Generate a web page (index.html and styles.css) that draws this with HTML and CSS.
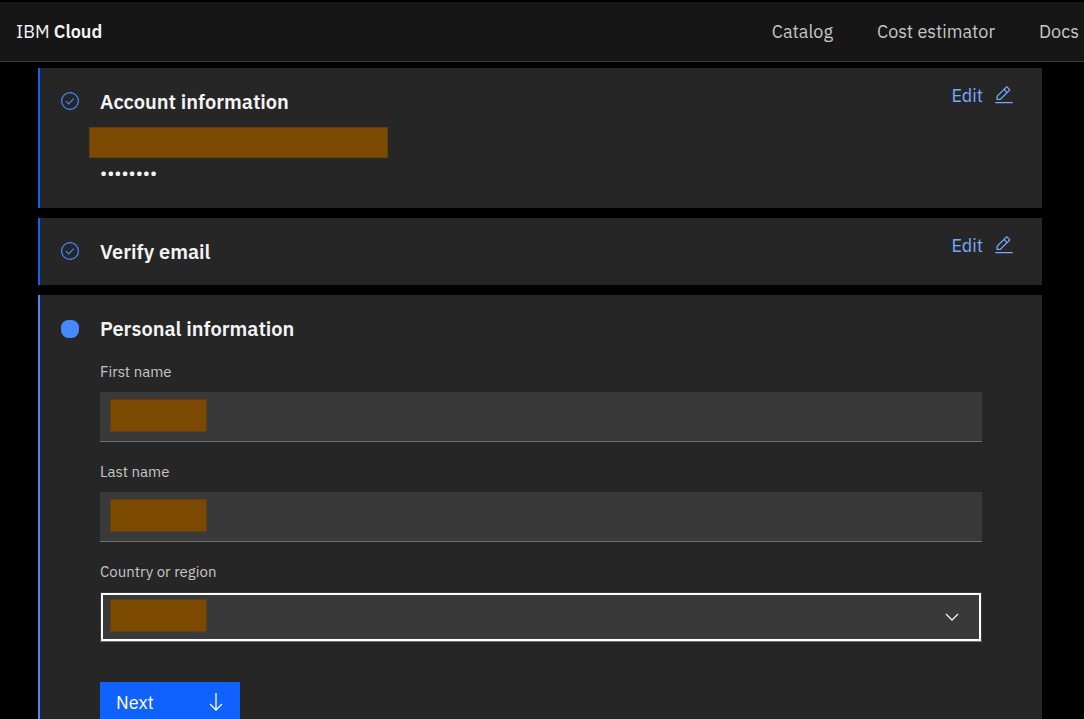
FILE: index.html
```html
<!DOCTYPE html>
<html lang="en">
<head>
<meta charset="utf-8">
<title>IBM Cloud</title>
<link rel="stylesheet" href="styles.css">
</head>
<body>
<header class="topbar">
  <a class="brand" href="#">IBM <strong>Cloud</strong></a>
  <nav class="nav">
    <a href="#">Catalog</a>
    <a href="#">Cost estimator</a>
    <a href="#">Docs</a>
  </nav>
</header>
<main class="steps">
  <section class="card">
    <div class="head">
      <svg class="status" viewBox="0 0 20 20" aria-hidden="true"><circle cx="10" cy="10" r="8.4"/><path d="M6 10.2l2.6 2.6 5.2-5.2"/></svg>
      <h2>Account information</h2>
      <button class="edit" type="button">Edit
        <svg viewBox="0 0 32 32" aria-hidden="true"><path d="M2 27h28v2H2zM25.4 9c.8-.8.8-2 0-2.8l-3.6-3.6c-.8-.8-2-.8-2.8 0l-15 15V24h6.4zM20.4 4L24 7.6l-3 3L17.4 7zM6 22v-3.6l10-10 3.6 3.6-10 10z"/></svg>
      </button>
    </div>
    <div class="body">
      <div class="mask mask-email"></div>
      <p class="password">••••••••</p>
    </div>
  </section>

  <section class="card">
    <div class="head">
      <svg class="status" viewBox="0 0 20 20" aria-hidden="true"><circle cx="10" cy="10" r="8.4"/><path d="M6 10.2l2.6 2.6 5.2-5.2"/></svg>
      <h2>Verify email</h2>
      <button class="edit" type="button">Edit
        <svg viewBox="0 0 32 32" aria-hidden="true"><path d="M2 27h28v2H2zM25.4 9c.8-.8.8-2 0-2.8l-3.6-3.6c-.8-.8-2-.8-2.8 0l-15 15V24h6.4zM20.4 4L24 7.6l-3 3L17.4 7zM6 22v-3.6l10-10 3.6 3.6-10 10z"/></svg>
      </button>
    </div>
  </section>

  <section class="card current">
    <div class="head">
      <svg class="status" viewBox="0 0 20 20" aria-hidden="true"><rect x="1" y="1" width="18" height="18" rx="7.5"/></svg>
      <h2>Personal information</h2>
    </div>
    <form class="body form">
      <div class="field">
        <label for="first">First name</label>
        <div class="control"><input id="first" type="text"><span class="mask mask-field"></span></div>
      </div>
      <div class="field">
        <label for="last">Last name</label>
        <div class="control"><input id="last" type="text"><span class="mask mask-field"></span></div>
      </div>
      <div class="field">
        <label for="country">Country or region</label>
        <div class="control">
          <select id="country" class="focused"><option></option></select>
          <span class="mask mask-field"></span>
          <svg class="chevron" viewBox="0 0 16 16" aria-hidden="true"><path d="M2 5l6 6 6-6"/></svg>
        </div>
      </div>
      <button class="next" type="button">Next
        <svg viewBox="0 0 20 20" aria-hidden="true"><path d="M10 1v17M4 12l6 6 6-6"/></svg>
      </button>
    </form>
  </section>
</main>
</body>
</html>
```

FILE: styles.css
```css
* {
  box-sizing: border-box;
}

body {
  margin: 0;
  height: 100vh;
  display: flex;
  flex-direction: column;
  overflow: hidden;
  background: #000;
  color: #f4f4f4;
  font-family: "IBM Plex Sans", "Noto Sans", sans-serif;
}

button,
input,
select {
  font: inherit;
  border: 0;
  border-radius: 0;
}

.topbar {
  flex: none;
  display: flex;
  align-items: center;
  justify-content: space-between;
  height: 62px;
  padding: 0 5px 0 16px;
  background: #161616;
  border-top: 2px solid #000;
  border-bottom: 1px solid #393939;
  font-size: 18px;
}

.topbar a {
  color: #c6c6c6;
  text-decoration: none;
}

.topbar .brand {
  color: #f4f4f4;
}

.brand strong {
  font-weight: 600;
}

.nav {
  display: flex;
  gap: 44px;
}

.steps {
  flex: 1;
  min-height: 0;
  overflow: hidden;
  padding: 6px 42px 0 38px;
}

.card {
  margin-bottom: 10px;
  padding: 14px 28px 19px 20px;
  background: #262626;
  border-left: 2px solid #0f62fe;
}

.current {
  min-height: 100vh;
  border-color: #4589ff;
}

.head {
  display: flex;
  align-items: flex-start;
}

.head h2 {
  flex: 1;
  margin: 0;
  padding-top: 6px;
  font-size: 20px;
  line-height: 28px;
  font-weight: 600;
}

.status {
  flex: none;
  width: 20px;
  height: 20px;
  margin: 9px 20px 0 0;
  fill: none;
  stroke: #4589ff;
  stroke-width: 1.2;
}

.current .status {
  margin-top: 10px;
  fill: #4589ff;
  stroke: none;
}

.edit {
  display: flex;
  align-items: center;
  gap: 11px;
  padding: 0;
  background: none;
  color: #78a9ff;
  font-size: 18px;
  line-height: 28px;
}

.edit svg {
  width: 20px;
  height: 20px;
  margin-bottom: 2px;
  fill: currentColor;
}

.body {
  padding-left: 40px;
}

.mask {
  display: block;
  background: #7b4a00;
  border: 1px solid #5f4013;
}

.mask-email {
  width: 299px;
  height: 31px;
  margin: 11px 0 0 -11px;
}

.password {
  margin: 0;
  font-size: 18px;
  line-height: 31px;
}

.form {
  padding-top: 19px;
  padding-right: 32px;
}

.field {
  margin-bottom: 20px;
}

.field label {
  display: block;
  margin-bottom: 10px;
  color: #c6c6c6;
  font-size: 15px;
  line-height: 20px;
}

.control {
  position: relative;
}

.control input,
.control select {
  display: block;
  width: 100%;
  height: 50px;
  padding: 0 16px;
  background: #393939;
  color: #f4f4f4;
  border-bottom: 1px solid #6f6f6f;
  appearance: none;
}

.control .focused {
  outline: 2px solid #fff;
  outline-offset: -3px;
}

.mask-field {
  position: absolute;
  top: 7px;
  left: 10px;
  width: 97px;
  height: 33px;
  pointer-events: none;
}

.chevron {
  position: absolute;
  top: 17px;
  right: 22px;
  width: 16px;
  height: 16px;
  fill: none;
  stroke: #f4f4f4;
  stroke-width: 1.3;
  pointer-events: none;
}

.next {
  display: flex;
  align-items: center;
  justify-content: space-between;
  width: 140px;
  height: 40px;
  margin-top: 40px;
  padding: 0 14px 0 16px;
  background: #0f62fe;
  color: #fff;
  font-size: 18px;
}

.next svg {
  width: 20px;
  height: 20px;
  fill: none;
  stroke: currentColor;
  stroke-width: 1.3;
}
```
